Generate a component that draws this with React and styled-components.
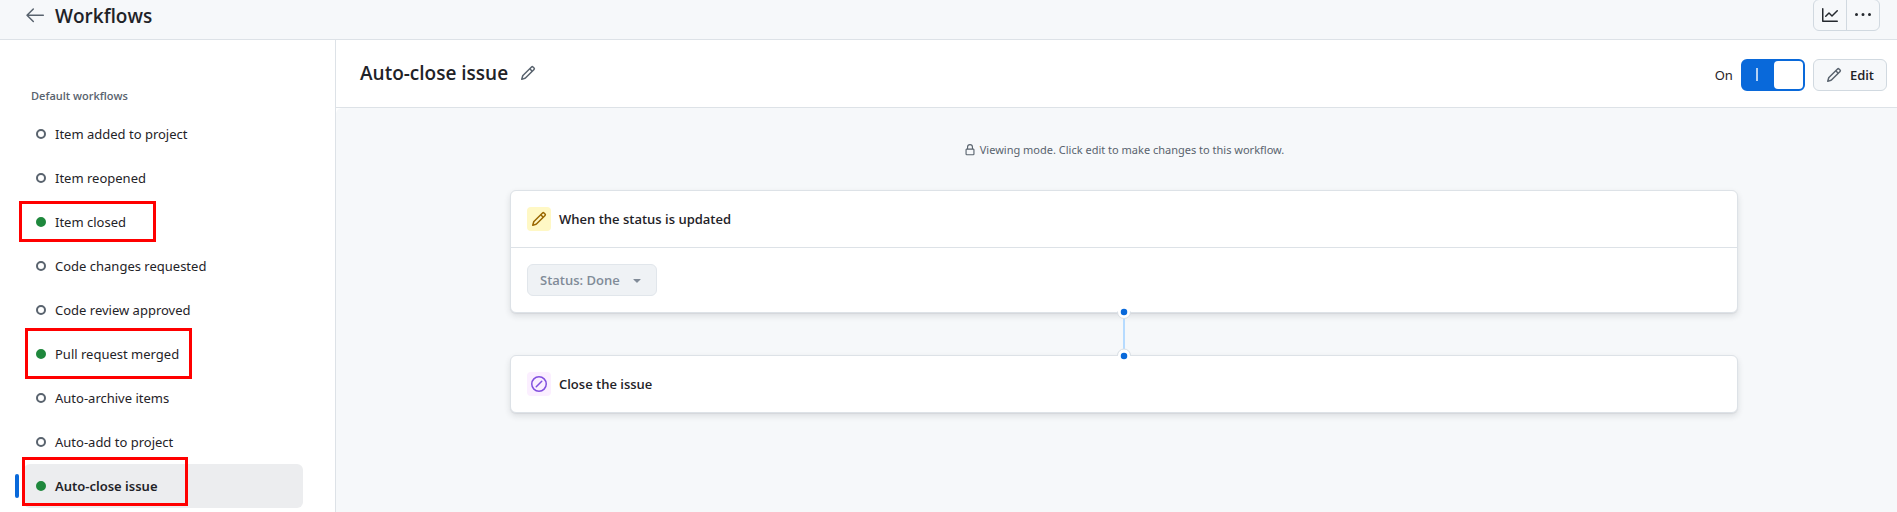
import React, { useState } from 'react'
import styled, { createGlobalStyle } from 'styled-components'

const workflows = [
    { name: 'Item added to project' },
    { name: 'Item reopened' },
    { name: 'Item closed', enabled: true },
    { name: 'Code changes requested' },
    { name: 'Code review approved' },
    { name: 'Pull request merged', enabled: true },
    { name: 'Auto-archive items' },
    { name: 'Auto-add to project' },
    { name: 'Auto-close issue', enabled: true, selected: true },
]

// highlight frames drawn over some of the rows
const frames = {
    'Item closed': { top: 1, left: -5, width: 137, height: 41 },
    'Pull request merged': { top: -4, left: 1, width: 167, height: 51 },
    'Auto-close issue': { top: -7, left: -2, width: 166, height: 49 },
}

const paths = {
    pencil: 'M11.013 1.427a1.75 1.75 0 0 1 2.474 0l1.086 1.086a1.75 1.75 0 0 1 0 2.474l-8.61 8.61c-.21.21-.47.364-.756.445l-3.251.93a.75.75 0 0 1-.927-.928l.929-3.25c.081-.286.235-.547.445-.758l8.61-8.61Zm.176 4.823L9.75 4.81l-6.286 6.287a.253.253 0 0 0-.064.108l-.558 1.953 1.953-.558a.253.253 0 0 0 .108-.064Zm1.238-3.763a.25.25 0 0 0-.354 0L10.811 3.75l1.439 1.44 1.263-1.263a.25.25 0 0 0 0-.354Z',
    lock: 'M4 4a4 4 0 0 1 8 0v2h.25c.966 0 1.75.784 1.75 1.75v5.5A1.75 1.75 0 0 1 12.25 15h-8.5A1.75 1.75 0 0 1 2 13.25v-5.5C2 6.784 2.784 6 3.75 6H4Zm8.25 3.5h-8.5a.25.25 0 0 0-.25.25v5.5c0 .138.112.25.25.25h8.5a.25.25 0 0 0 .25-.25v-5.5a.25.25 0 0 0-.25-.25ZM10.5 6V4a2.5 2.5 0 1 0-5 0v2Z',
    graph: 'M1.5 1.75V13.5h13.75a.75.75 0 0 1 0 1.5H.75a.75.75 0 0 1-.75-.75V1.75a.75.75 0 0 1 1.5 0Zm14.28 2.53-5.25 5.25a.75.75 0 0 1-1.06 0L7 7.06 4.28 9.78a.751.751 0 0 1-1.042-.018.751.751 0 0 1-.018-1.042l3.25-3.25a.75.75 0 0 1 1.06 0L10 7.94l4.72-4.72a.751.751 0 0 1 1.042.018.751.751 0 0 1 .018 1.042Z',
    kebab: 'M8 9a1.5 1.5 0 1 0 0-3 1.5 1.5 0 0 0 0 3ZM1.5 9a1.5 1.5 0 1 0 0-3 1.5 1.5 0 0 0 0 3Zm13 0a1.5 1.5 0 1 0 0-3 1.5 1.5 0 0 0 0 3Z',
    caret: 'm4.427 7.427 3.396 3.396a.25.25 0 0 0 .354 0l3.396-3.396A.25.25 0 0 0 11.396 7H4.604a.25.25 0 0 0-.177.427Z',
}

const Icon = ({ name, size = 16 }) => (
    <svg width={size} height={size} viewBox="0 0 16 16" fill="currentColor" aria-hidden="true">
        <path d={paths[name]} />
    </svg>
)

const BackIcon = () => (
    <svg width="24" height="24" viewBox="0 0 24 24" fill="none" stroke="currentColor" strokeWidth="1.5" strokeLinecap="round" strokeLinejoin="round" aria-hidden="true">
        <path d="M10.3 6 4 12.25l6.3 6.25M4 12.25h16.3" />
    </svg>
)

const SkipIcon = () => (
    <svg width="16" height="16" viewBox="0 0 16 16" fill="none" stroke="currentColor" strokeWidth="1.5" strokeLinecap="round" aria-hidden="true">
        <circle cx="8" cy="8" r="7.25" />
        <path d="M5.25 10.75l5.5-5.5" />
    </svg>
)

const App = () => {
    const [on, setOn] = useState(true)

    return (
        <Page>
            <GlobalStyle />
            <TopBar>
                <BackLink href="#back" aria-label="Back"><BackIcon /></BackLink>
                <Title>Workflows</Title>
                <ButtonGroup>
                    <GroupButton aria-label="Insights"><Icon name="graph" /></GroupButton>
                    <GroupButton aria-label="More options"><Icon name="kebab" /></GroupButton>
                </ButtonGroup>
            </TopBar>
            <Body>
                <Sidebar>
                    <SectionName>Default workflows</SectionName>
                    <List>
                        {workflows.map((w) => (
                            <Item key={w.name}>
                                <ItemLink href="#workflow" $selected={w.selected}>
                                    <Dot $on={w.enabled} />
                                    {w.name}
                                </ItemLink>
                                {frames[w.name] && <Frame $box={frames[w.name]} />}
                            </Item>
                        ))}
                    </List>
                </Sidebar>
                <Main>
                    <WorkflowBar>
                        <WorkflowName>Auto-close issue</WorkflowName>
                        <IconButton aria-label="Rename workflow"><Icon name="pencil" /></IconButton>
                        <Controls>
                            <span id="toggle-label">On</span>
                            <Toggle role="switch" aria-checked={on} aria-labelledby="toggle-label" onClick={() => setOn(!on)}>
                                <ToggleLine />
                                <Knob />
                            </Toggle>
                            <EditButton><Icon name="pencil" />Edit</EditButton>
                        </Controls>
                    </WorkflowBar>
                    <Canvas>
                        <Notice>
                            <Icon name="lock" size={12} />
                            Viewing mode. Click edit to make changes to this workflow.
                        </Notice>
                        <Card>
                            <CardHead>
                                <Chip $bg="#fff8c5" $color="#9a6700"><Icon name="pencil" /></Chip>
                                When the status is updated
                            </CardHead>
                            <CardBody>
                                <SelectBox>
                                    <Select disabled aria-label="Status">
                                        <option>Status: Done</option>
                                    </Select>
                                    <Icon name="caret" />
                                </SelectBox>
                            </CardBody>
                        </Card>
                        <Connector width="16" height="42" viewBox="0 0 16 42" fill="none" aria-hidden="true">
                            <path d="M8 5v32" stroke="#b6dbff" strokeWidth="2" />
                            <path d="M1.5 -1.5v0.5a6.5 6.5 0 0 0 13 0v-0.5" fill="#fff" stroke="#d8dee4" />
                            <path d="M1.5 43v-0.5a6.5 6.5 0 0 1 13 0v0.5" fill="#fff" stroke="#d8dee4" />
                            <circle cx="8" cy="-1" r="3.25" fill="#0969da" />
                            <circle cx="8" cy="43" r="3.25" fill="#0969da" />
                        </Connector>
                        <Card>
                            <CardHead>
                                <Chip $bg="#fbefff" $color="#8250df"><SkipIcon /></Chip>
                                Close the issue
                            </CardHead>
                        </Card>
                    </Canvas>
                </Main>
            </Body>
        </Page>
    )
}

const titleFont = '"Segoe UI", "Open Sans", "Noto Sans", sans-serif'

const GlobalStyle = createGlobalStyle`
    * {
        box-sizing: border-box;
    }
    body {
        margin: 0;
        font-family: "Segoe UI", "Noto Sans", "Open Sans", sans-serif;
        font-size: 13px;
        line-height: 20px;
        color: #1f2328;
        background: #fff;
    }
    button, select {
        font: inherit;
        color: inherit;
        margin: 0;
        cursor: pointer;
    }
    svg {
        display: block;
        flex-shrink: 0;
    }
`

const Page = styled.div`
    display: flex;
    flex-direction: column;
    min-height: 100vh;
`

const TopBar = styled.header`
    display: flex;
    align-items: center;
    height: 40px;
    padding: 0 17px 9px 23px;
    background: #f6f8fa;
    border-bottom: 1px solid #dde2e7;
`

const BackLink = styled.a`
    color: #59636e;
    margin-right: 8px;
`

const Title = styled.h1`
    margin: 0;
    padding-top: 2px;
    font-family: ${titleFont};
    font-size: 19px;
    line-height: 28px;
    font-weight: 600;
`

const ButtonGroup = styled.div`
    display: flex;
    margin-left: auto;
    border: 1px solid #d1d9e0;
    border-radius: 6px;
`

const GroupButton = styled.button`
    display: flex;
    align-items: center;
    justify-content: center;
    width: 32px;
    height: 30px;
    padding: 0;
    border: none;
    background: transparent;
    color: #25292e;
    & + & {
        width: 33px;
        border-left: 1px solid #d1d9e0;
    }
`

const Body = styled.div`
    display: flex;
    flex: 1;
`

const Sidebar = styled.nav`
    width: 336px;
    flex-shrink: 0;
    padding: 46px 32px 4px 24px;
    border-right: 1px solid #dde2e7;
`

const SectionName = styled.h2`
    margin: 0;
    padding: 0 7px 6px;
    font-family: ${titleFont};
    font-size: 11px;
    line-height: 20px;
    font-weight: 600;
    color: #59636e;
`

const List = styled.ul`
    list-style: none;
    margin: 0;
    padding: 0;
`

const Item = styled.li`
    position: relative;
`

const ItemLink = styled.a`
    display: flex;
    align-items: center;
    gap: 9px;
    height: 44px;
    padding: 0 12px;
    border-radius: 6px;
    color: inherit;
    text-decoration: none;
    font-weight: ${p => p.$selected ? 600 : 400};
    background: ${p => p.$selected ? '#ecedef' : 'transparent'};
    &::before {
        content: "";
        display: ${p => p.$selected ? 'block' : 'none'};
        position: absolute;
        left: -9px;
        top: 10px;
        width: 4px;
        height: 24px;
        border-radius: 2px;
        background: #0969da;
    }
`

const Dot = styled.span`
    width: 10px;
    height: 10px;
    border-radius: 50%;
    border: 2px solid ${p => p.$on ? '#1f883d' : '#59636e'};
    background: ${p => p.$on ? '#1f883d' : 'transparent'};
`

const Frame = styled.span`
    position: absolute;
    top: ${p => p.$box.top}px;
    left: ${p => p.$box.left}px;
    width: ${p => p.$box.width}px;
    height: ${p => p.$box.height}px;
    border: 3px solid #ff0000;
    pointer-events: none;
`

const Main = styled.main`
    flex: 1;
    min-width: 0;
    display: flex;
    flex-direction: column;
`

const WorkflowBar = styled.div`
    display: flex;
    align-items: center;
    height: 68px;
    padding: 2px 10px 0 24px;
    border-bottom: 1px solid #dde2e7;
`

const WorkflowName = styled.h2`
    margin: 0 12px 4px 0;
    font-family: ${titleFont};
    font-size: 19px;
    line-height: 28px;
    font-weight: 600;
`

const IconButton = styled.button`
    padding: 0;
    margin-bottom: 4px;
    border: none;
    background: none;
    color: #59636e;
`

const Controls = styled.div`
    display: flex;
    align-items: center;
    gap: 8px;
    margin-left: auto;
`

const Toggle = styled.button`
    display: flex;
    align-items: center;
    width: 64px;
    height: 32px;
    padding: 0;
    border: 2px solid #0969da;
    border-radius: 6px;
    background: #0969da;
`

const ToggleLine = styled.span`
    width: 2px;
    height: 13px;
    margin: 0 16px 0 13px;
    background: #b5d2f4;
`

const Knob = styled.span`
    flex: 1;
    height: 28px;
    border-radius: 4px;
    background: #fff;
`

const EditButton = styled.button`
    display: flex;
    align-items: center;
    gap: 8px;
    height: 32px;
    padding: 0 12px;
    border: 1px solid #d1d9e0;
    border-radius: 6px;
    background: #f6f8fa;
    font-family: ${titleFont};
    font-weight: 600;
    svg {
        color: #59636e;
    }
`

const Canvas = styled.div`
    flex: 1;
    padding: 32px 159px 40px 174px;
    background: #f6f8fa;
    border-top-left-radius: 6px;
`

const Notice = styled.p`
    display: flex;
    align-items: center;
    justify-content: center;
    gap: 4px;
    margin: 0 0 30px;
    font-size: 11px;
    color: #59636e;
`

const Card = styled.section`
    background: #fff;
    border: 1px solid #dde2e7;
    border-radius: 6px;
    box-shadow: 0 1px 1px rgba(37, 41, 46, 0.06), 0 3px 6px rgba(37, 41, 46, 0.12);
`

const CardHead = styled.div`
    display: flex;
    align-items: center;
    gap: 8px;
    padding: 16px;
    font-family: ${titleFont};
    font-weight: 600;
`

const Chip = styled.span`
    display: flex;
    align-items: center;
    justify-content: center;
    width: 24px;
    height: 24px;
    border-radius: 4px;
    background: ${p => p.$bg};
    color: ${p => p.$color};
`

const CardBody = styled.div`
    padding: 16px;
    border-top: 1px solid #dde2e7;
`

const SelectBox = styled.div`
    position: relative;
    width: fit-content;
    color: #818b98;
    svg {
        position: absolute;
        right: 12px;
        top: 8px;
        pointer-events: none;
    }
`

const Select = styled.select`
    display: block;
    appearance: none;
    height: 32px;
    padding: 0 36px 0 12px;
    border: 1px solid #e1e6eb;
    border-radius: 6px;
    background: #eff2f5;
    color: #818b98;
    font-family: ${titleFont};
    font-weight: 600;
    opacity: 1;
`

const Connector = styled.svg`
    position: relative;
    margin: 0 auto;
    overflow: visible;
`

export default App
